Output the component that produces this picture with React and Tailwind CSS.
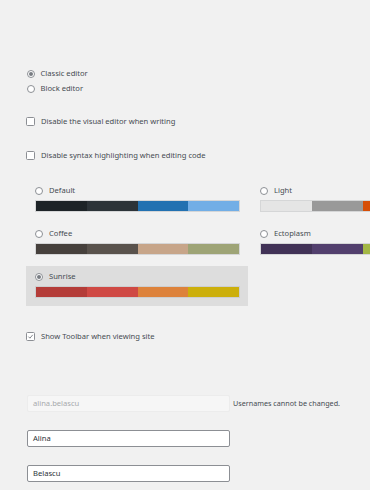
import React from "react";

const schemes = [
  { name: "Default", colors: ["#1d2327", "#2c3338", "#2271b1", "#72aee6"] },
  { name: "Light", colors: ["#e5e5e5", "#999999", "#d64e07", "#04a4cc"] },
  { name: "Coffee", colors: ["#46403c", "#59524c", "#c7a589", "#9ea476"] },
  { name: "Ectoplasm", colors: ["#413256", "#523f6d", "#a3b745", "#d46f15"] },
  { name: "Sunrise", colors: ["#b43c38", "#cf4944", "#dd823b", "#ccaf0b"], selected: true },
];

function Radio({ checked }) {
  return (
    <span className="flex h-[8px] w-[8px] shrink-0 items-center justify-center rounded-full border border-[#8c8f94] bg-white">
      {checked && <span className="h-[4px] w-[4px] rounded-full bg-[#787c82]" />}
    </span>
  );
}

function Checkbox({ checked }) {
  return (
    <span className="flex h-[9px] w-[9px] shrink-0 items-center justify-center rounded-[1.5px] border border-[#8c8f94] bg-white">
      {checked && (
        <svg viewBox="0 0 10 10" className="h-[7px] w-[7px]">
          <polyline points="2,5.2 4.2,7.4 8.2,2.6" fill="none" stroke="#787c82" strokeWidth="1.3" />
        </svg>
      )}
    </span>
  );
}

export default function App() {
  return (
    <div
      className="min-h-screen overflow-hidden bg-[#f1f1f1] pl-[26px] pt-[68px] text-[7.6px] text-[#464c52]"
      style={{ fontFamily: '"Noto Sans", "Open Sans", sans-serif' }}
    >
      <label className="flex h-[11px] items-center gap-[6px] pl-[0.5px]">
        <Radio checked />
        <span>Classic editor</span>
      </label>
      <label className="mt-[4px] flex h-[11px] items-center gap-[6px] pl-[0.5px]">
        <Radio />
        <span>Block editor</span>
      </label>

      <label className="mt-[22px] flex h-[11px] items-center gap-[6px]">
        <Checkbox />
        <span>Disable the visual editor when writing</span>
      </label>
      <label className="mt-[23px] flex h-[11px] items-center gap-[6px]">
        <Checkbox />
        <span>Disable syntax highlighting when editing code</span>
      </label>

      <div className="mt-[19px] grid w-[447px] grid-cols-[222px_222px] gap-x-[3px] gap-y-[3px]">
        {schemes.map((s) => (
          <div
            key={s.name}
            className={`h-[40px] pl-[9px] pr-[8px] pt-[5px] ${s.selected ? "bg-[#dddddd]" : ""}`}
          >
            <div className="flex h-[11px] items-center gap-[6px]">
              <Radio checked={s.selected} />
              <span>{s.name}</span>
            </div>
            <div className="mt-[4px] flex h-[12px] border border-[#c3c4c7]/60">
              {s.colors.map((c) => (
                <span key={c} className="flex-1" style={{ backgroundColor: c }} />
              ))}
            </div>
          </div>
        ))}
      </div>

      <label className="mt-[25px] flex h-[11px] items-center gap-[6px]">
        <Checkbox checked />
        <span>Show Toolbar when viewing site</span>
      </label>

      <div className="ml-[1px] mt-[53px] flex items-center gap-[3px]">
        <div className="flex h-[17px] w-[203px] items-center rounded-[2px] border border-[#ececec] bg-[#f6f6f6] px-[5px] text-[#a7aaad]">
          alina.belascu
        </div>
        <span className="text-[7.2px]">Usernames cannot be changed.</span>
      </div>
      <div className="ml-[1px] mt-[18px] flex h-[17px] w-[203px] items-center rounded-[2px] border border-[#8c8f94] bg-white px-[5px] text-[#2c3338]">
        Alina
      </div>
      <div className="ml-[1px] mt-[18px] flex h-[17px] w-[203px] items-center rounded-[2px] border border-[#8c8f94] bg-white px-[5px] text-[#2c3338]">
        Belascu
      </div>
    </div>
  );
}
